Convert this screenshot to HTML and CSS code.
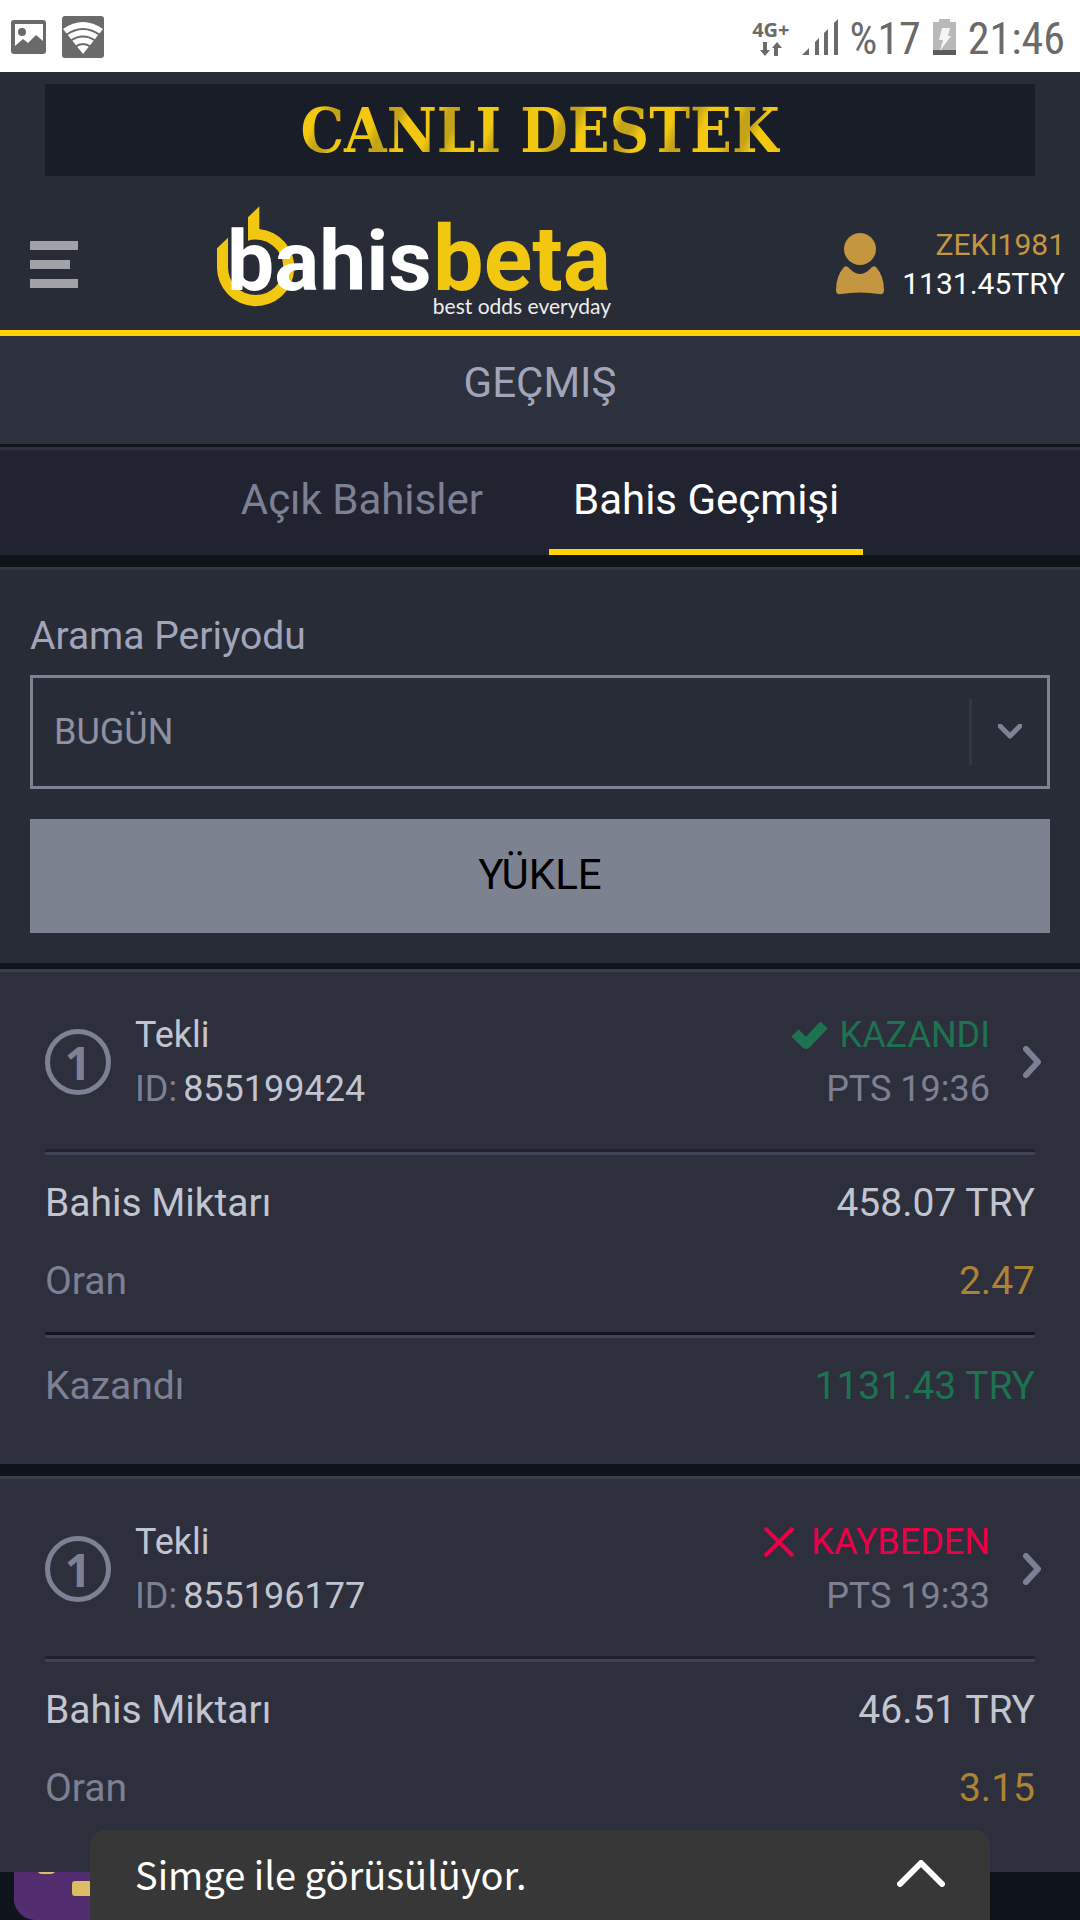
FILE: index.html
```html
<!DOCTYPE html>
<html lang="tr">
<head>
<meta charset="utf-8">
<meta name="viewport" content="width=device-width, initial-scale=1">
<title>Bahis Geçmişi</title>
<link rel="stylesheet" href="styles.css">
</head>
<body>
<div class="status">
  <svg class="status-picture" width="36" height="34" viewBox="0 0 36 34"><rect width="35" height="34" rx="3" fill="#6a6a6a"/><path d="M4 4h28v17l-7-6-8 8-5-4-8 7z" fill="#fff"/><circle cx="11" cy="12" r="4" fill="#6a6a6a"/></svg>
  <svg class="status-wifi" width="42" height="42" viewBox="0 0 42 42"><rect width="42" height="42" rx="3" fill="#6a6a6a"/><path d="M21 38L1 13Q21-1 41 13z" fill="#fff"/><path d="M4 19q17-12 34 0M8 25q13-9 26 0M13 31q8-6 16 0" fill="none" stroke="#6a6a6a" stroke-width="2"/></svg>
  <div class="status-right">
    <div class="network"><span>4G+</span><svg width="22" height="14" viewBox="0 0 22 14"><path d="M3 0h4v8h3l-5 6-5-6h3zM14 14h4V6h4l-5-6-5 6h2z" fill="#6a6a6a"/></svg></div>
    <svg class="signal" width="36" height="36" viewBox="0 0 36 36"><path d="M0 36l7-7v7zM13 36V23l4-4v17zM22 36V14l4-4v26zM32 36V4l4-4v36z" fill="#6a6a6a"/></svg>
    <span class="status-value">%17</span>
    <svg class="battery" width="23" height="36" viewBox="0 0 23 36"><path d="M0 3h6V0h11v3h6v33H0z" fill="#b9b9b9"/><path d="M0 31h23v5H0z" fill="#5c5c5c"/><path d="M9 9h8l-2 8h3L7 32l3-11H6z" fill="#f4f4f4"/></svg>
    <span class="status-value">21:46</span>
  </div>
</div>

<header class="header">
  <a class="support" href="#destek"><span>CANLI DESTEK</span></a>
  <div class="bar">
    <button class="menu" type="button" aria-label="Menü"><i></i><i></i><i></i></button>
    <a class="logo" href="#anasayfa" aria-label="bahisbeta">
      <svg width="396" height="116" viewBox="0 0 396 116">
        <path transform="scale(.3333) translate(-51 -51)" d="M51 178L84 146V235A83 83 0 0 0 250 235A83 83 0 0 0 144 155V85L178 52V120A116 116 0 1 1 51 235Z" fill="#f1c70f"/>
        <text class="wordmark-first" x="10" y="84" fill="#fff">bahis</text>
        <text class="wordmark-second" x="216" y="84" fill="#f1c70f">beta</text>
        <text class="tagline" x="394" y="108" fill="#eee" text-anchor="end">best odds everyday</text>
      </svg>
    </a>
    <a class="user" href="#hesap">
      <svg width="48" height="62" viewBox="0 0 48 62"><circle cx="24" cy="16" r="16" fill="#c3963f"/><path d="M8 34q3-2 6 2 10 10 20 0 3-4 6-2 8 9 8 23 0 5-5 4-19-3-38 0-5 1-5-4 0-14 8-23z" fill="#c3963f"/></svg>
      <span class="user-text"><span class="user-name">ZEKI1981</span><span>1131.45TRY</span></span>
    </a>
  </div>
</header>

<main>
  <h1 class="title">GEÇMIŞ</h1>
  <nav class="tabs">
    <a class="tab" href="#acik">Açık Bahisler</a>
    <a class="tab tab-active" href="#gecmis">Bahis Geçmişi</a>
  </nav>

  <form class="search">
    <label class="search-label" for="period">Arama Periyodu</label>
    <div class="select">
      <select id="period"><option>BUGÜN</option></select>
      <span class="select-arrow"><svg width="24" height="16" viewBox="0 0 24 16"><path d="M2 2l10 10L22 2" fill="none" stroke="#7f8294" stroke-width="5" stroke-linecap="round" stroke-linejoin="round"/></svg></span>
    </div>
    <button class="load" type="button">YÜKLE</button>
  </form>

  <article class="bet">
    <a class="bet-head" href="#855199424">
      <span class="count">1</span>
      <span class="bet-name"><span>Tekli</span><span class="bet-id"><span class="muted">ID:</span><span>855199424</span></span></span>
      <span class="bet-result">
        <span class="outcome won"><svg width="37" height="29" viewBox="0 0 37 29"><path d="M4 12l11 11L33 4" fill="none" stroke="currentColor" stroke-width="10" stroke-linejoin="round"/></svg>KAZANDI</span>
        <span class="muted">PTS 19:36</span>
      </span>
      <svg class="next" width="18" height="32" viewBox="0 0 18 32"><path d="M3 3l12 13L3 29" fill="none" stroke="#7d8094" stroke-width="6" stroke-linecap="round" stroke-linejoin="round"/></svg>
    </a>
    <dl class="rows">
      <div class="row"><dt>Bahis Miktarı</dt><dd>458.07 TRY</dd></div>
      <div class="row muted"><dt>Oran</dt><dd class="odds">2.47</dd></div>
    </dl>
    <dl class="rows payout">
      <div class="row muted"><dt>Kazandı</dt><dd class="won">1131.43 TRY</dd></div>
    </dl>
  </article>

  <article class="bet">
    <a class="bet-head" href="#855196177">
      <span class="count">1</span>
      <span class="bet-name"><span>Tekli</span><span class="bet-id"><span class="muted">ID:</span><span>855196177</span></span></span>
      <span class="bet-result">
        <span class="outcome lost"><svg width="36" height="30" viewBox="0 0 36 30"><path d="M2 1l28 28M30 1L2 29" fill="none" stroke="currentColor" stroke-width="4"/></svg>KAYBEDEN</span>
        <span class="muted">PTS 19:33</span>
      </span>
      <svg class="next" width="18" height="32" viewBox="0 0 18 32"><path d="M3 3l12 13L3 29" fill="none" stroke="#7d8094" stroke-width="6" stroke-linecap="round" stroke-linejoin="round"/></svg>
    </a>
    <dl class="rows rows-last">
      <div class="row"><dt>Bahis Miktarı</dt><dd>46.51 TRY</dd></div>
      <div class="row muted"><dt>Oran</dt><dd class="odds">3.15</dd></div>
    </dl>
  </article>
</main>

<footer class="footer">
  <svg width="120" height="48" viewBox="0 0 120 48"><path d="M0 0h120v48H20Q4 46 0 30z" fill="#522d70"/><path d="M24 0h17q-2 2-4 2h-9q-3 0-4-2z" fill="#dcbd63"/><rect x="58" y="9" width="40" height="15" rx="3" fill="#dcbd63"/></svg>
</footer>

<button class="chat" type="button">
  <span>Simge ile görüsülüyor.</span>
  <svg width="48" height="27" viewBox="0 0 48 27"><path d="M3 24L24 3l21 21" fill="none" stroke="#fff" stroke-width="6" stroke-linecap="round" stroke-linejoin="round"/></svg>
</button>
</body>
</html>
```
FILE: styles.css
```css
* {
  box-sizing: border-box;
}

body {
  margin: 0;
  min-height: 100vh;
  background: #0f131a;
  color: #c2c4d0;
  font-family: Roboto, sans-serif;
  font-size: 39px;
}

a {
  color: inherit;
  text-decoration: none;
}

svg {
  display: block;
  flex: none;
}

button {
  border: 0;
  font-family: inherit;
  cursor: pointer;
}

/* Device status bar */
.status {
  display: flex;
  align-items: center;
  height: 72px;
  padding: 2px 15px 0 11px;
  background: #fff;
  color: #6a6a6a;
}

.status-wifi {
  margin-left: 15px;
}

.status-right {
  display: flex;
  align-items: center;
  gap: 12px;
  margin-left: auto;
  font-family: "Roboto Condensed", Roboto, sans-serif;
  font-size: 44px;
  line-height: 60px;
}

.status-value {
  padding-top: 4px;
}

.network {
  display: flex;
  flex-direction: column;
  align-items: center;
  font-family: "Noto Sans", sans-serif;
  font-size: 20px;
  font-weight: 700;
  line-height: 24px;
}

/* Header */
.header {
  padding-top: 12px;
  border-bottom: 6px solid #ffd200;
  background: #282c37;
}

.support {
  display: flex;
  align-items: center;
  justify-content: center;
  height: 92px;
  margin: 0 45px;
  background: #191d28;
  font-family: "Roboto Slab", "DejaVu Serif Condensed", "DejaVu Serif", serif;
  font-size: 61px;
  font-weight: 700;
}

.support span {
  background: repeating-linear-gradient(115deg, #f1c70f 0 24px, #c4a319 34px 44px, #f1c70f 54px);
  background-clip: text;
  color: transparent;
}

.bar {
  display: flex;
  align-items: center;
  height: 154px;
  padding: 22px 15px 0 30px;
}

.menu {
  display: grid;
  gap: 10px;
  width: 48px;
  padding: 0;
  background: none;
}

.menu i {
  height: 9px;
  background: #a1a1a8;
}

.menu i:nth-child(2) {
  width: 40px;
}

.logo {
  margin-left: 139px;
}

.wordmark-first,
.wordmark-second {
  font-family: Roboto, sans-serif;
  font-weight: 700;
}

.wordmark-first {
  font-size: 84px;
}

.wordmark-second {
  font-size: 90px;
}

.tagline {
  font-family: Lato, sans-serif;
  font-size: 21px;
}

.user {
  display: flex;
  align-items: center;
  gap: 18px;
  margin-left: auto;
  color: #fff;
  font-size: 30px;
  line-height: 39px;
}

.user-text {
  display: grid;
  justify-items: end;
}

.user-name {
  color: #c3963f;
}

/* Title and tabs */
.title {
  height: 108px;
  margin: 0;
  padding-top: 21px;
  background: #2d313d;
  color: #a2a5b9;
  font-size: 42px;
  font-weight: 400;
  line-height: 51px;
  text-align: center;
}

.tabs {
  display: flex;
  justify-content: center;
  gap: 42px;
  border-top: 3px solid #2d313d;
  margin-top: 3px;
  margin-bottom: 12px;
  background: #212430;
}

.tab {
  padding: 24px;
  border-bottom: 6px solid transparent;
  color: #7d8094;
  font-size: 42px;
  line-height: 51px;
}

.tab-active {
  border-color: #ffd200;
  color: #fff;
}

/* Search form */
.search {
  display: flex;
  flex-direction: column;
  margin-bottom: 6px;
  padding: 41px 30px 30px;
  border-top: 3px solid #343844;
  background: #282c37;
}

.search-label {
  margin-bottom: 13px;
  color: #a2a5b9;
  font-size: 39px;
  line-height: 51px;
}

.select {
  position: relative;
  margin-bottom: 30px;
}

.select select {
  display: block;
  width: 100%;
  height: 114px;
  padding: 0 100px 0 21px;
  border: 3px solid #7f8294;
  border-radius: 0;
  appearance: none;
  background: #282c37;
  color: #8e90a3;
  font-family: inherit;
  font-size: 36px;
}

.select-arrow {
  position: absolute;
  top: 24px;
  right: 3px;
  display: grid;
  place-items: center;
  width: 78px;
  height: 66px;
  border-left: 3px solid #343844;
  pointer-events: none;
}

.load {
  height: 114px;
  padding: 0 0 4px;
  background: #7d8291;
  color: #000;
  font-size: 42px;
}

/* Bet cards */
.bet {
  padding: 0 45px;
  border-top: 3px solid #3a3e4a;
  background: #2d303c;
}

.bet + .bet {
  margin-top: 12px;
}

.bet-head {
  display: flex;
  align-items: center;
  padding: 36px 0 33px;
  border-bottom: 3px solid #20232e;
  font-size: 36px;
  line-height: 54px;
}

.count {
  display: grid;
  place-items: center;
  width: 66px;
  height: 66px;
  border: 5px solid #7d8194;
  border-radius: 50%;
  color: #7d8194;
  font-family: "Noto Sans", sans-serif;
  font-size: 46px;
  font-weight: 700;
}

.bet-name {
  display: grid;
  margin-left: 24px;
}

.bet-id {
  display: flex;
  gap: 6px;
}

.bet-result {
  display: grid;
  justify-items: end;
  margin-left: auto;
}

.outcome {
  display: flex;
  align-items: center;
  gap: 12px;
}

.next {
  margin: 0 -6px 0 33px;
}

.muted {
  color: #7d8094;
}

.won {
  color: #1d7250;
}

.lost {
  color: #eb0048;
}

.odds {
  color: #ac8335;
}

.rows {
  margin: 0;
  padding: 9px 0 15px;
  border-top: 3px solid #404355;
  line-height: 78px;
}

.rows-last {
  padding-bottom: 45px;
}

.payout {
  padding-bottom: 39px;
  box-shadow: 0 -3px 0 #12141e;
}

.row {
  display: flex;
  justify-content: space-between;
}

.row dd {
  margin: 0;
}

/* Footer and chat */
.footer {
  height: 48px;
  padding-left: 14px;
}

.chat {
  position: fixed;
  right: 90px;
  bottom: 0;
  left: 90px;
  display: flex;
  align-items: center;
  justify-content: space-between;
  height: 90px;
  padding: 0 45px 4px;
  border-radius: 15px 15px 0 0;
  background: #373737;
  color: #fff;
  font-family: "Noto Sans CJK SC", sans-serif;
  font-size: 38px;
}
```
